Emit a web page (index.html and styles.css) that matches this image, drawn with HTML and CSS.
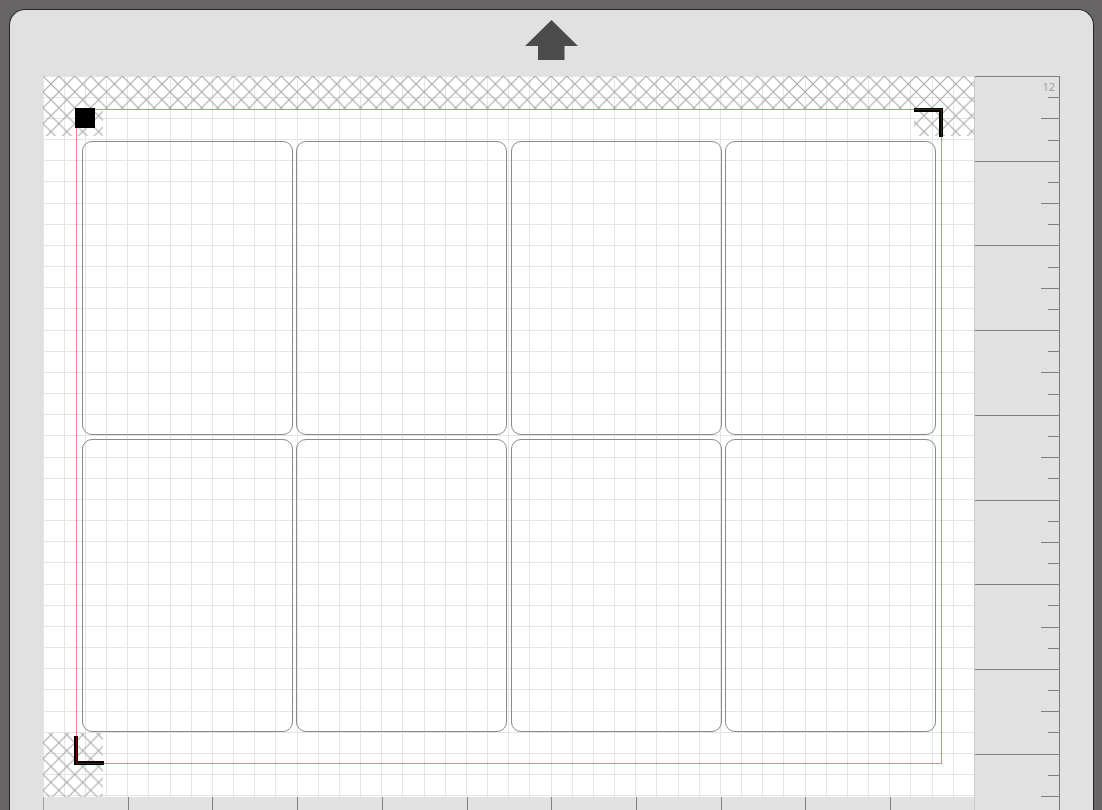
FILE: index.html
```html
<!DOCTYPE html>
<html lang="en">
<head>
<meta charset="utf-8">
<title>Mat Preview</title>
<link rel="stylesheet" href="styles.css">
</head>
<body>
<div class="device">
  <header class="device-head">
    <svg class="load-arrow" width="53" height="40" viewBox="0 0 53 40" aria-label="Load mat">
      <polygon points="26.5,0 53,26 39.5,26 39.5,40 13,40 13,26 0,26"/>
    </svg>
  </header>

  <div class="workspace">
    <div class="mat-col">
      <div class="mat">
        <svg class="mat-art" width="931" height="721" viewBox="0 0 931 721">
          <defs>
            <pattern id="hatch" width="15.875" height="15.875" patternUnits="userSpaceOnUse">
              <path d="M-1 -1L16.875 16.875M16.875 -1L-1 16.875M-1 1L1 -1M14.875 16.875L16.875 14.875" class="hatch-line"/>
            </pattern>
          </defs>
          <!-- quarter-inch grid -->
          <path class="grid" d="M0.5 0V721M21.5 0V721M42.5 0V721M63.5 0V721M84.5 0V721M105.5 0V721M127.5 0V721M148.5 0V721M169.5 0V721M190.5 0V721M211.5 0V721M232.5 0V721M254.5 0V721M275.5 0V721M296.5 0V721M317.5 0V721M338.5 0V721M359.5 0V721M381.5 0V721M402.5 0V721M423.5 0V721M444.5 0V721M465.5 0V721M486.5 0V721M508.5 0V721M529.5 0V721M550.5 0V721M571.5 0V721M592.5 0V721M613.5 0V721M635.5 0V721M656.5 0V721M677.5 0V721M698.5 0V721M719.5 0V721M740.5 0V721M762.5 0V721M783.5 0V721M804.5 0V721M825.5 0V721M846.5 0V721M867.5 0V721M889.5 0V721M910.5 0V721
          M0 0.5H931M0 21.5H931M0 42.5H931M0 63.5H931M0 84.5H931M0 105.5H931M0 127.5H931M0 148.5H931M0 169.5H931M0 190.5H931M0 211.5H931M0 232.5H931M0 254.5H931M0 275.5H931M0 296.5H931M0 317.5H931M0 338.5H931M0 359.5H931M0 381.5H931M0 402.5H931M0 423.5H931M0 444.5H931M0 465.5H931M0 486.5H931M0 508.5H931M0 529.5H931M0 550.5H931M0 571.5H931M0 592.5H931M0 613.5H931M0 635.5H931M0 656.5H931M0 677.5H931M0 698.5H931M0 719.5H931"/>
          <!-- no-cut zones along the mat edge -->
          <path class="hatch" d="M0 0H931V33H0Z M0 0H60V60H0Z M871 0H931V60H871Z M0 657H60V721H0Z"/>
          <!-- registration brackets -->
          <rect class="reg" x="871" y="32" width="29" height="4"/>
          <rect class="reg" x="896" y="32" width="4" height="29"/>
          <rect class="reg" x="31" y="660" width="4" height="29"/>
          <rect class="reg" x="31" y="685" width="30" height="4"/>
          <!-- printable area -->
          <rect class="print-area" x="33.5" y="33.5" width="865" height="654"/>
          <rect class="reg" x="32" y="32" width="20" height="20"/>
        </svg>

        <div class="sheet">
          <div class="card"></div>
          <div class="card"></div>
          <div class="card"></div>
          <div class="card"></div>
          <div class="card"></div>
          <div class="card"></div>
          <div class="card"></div>
          <div class="card"></div>
        </div>
      </div>

      <div class="ruler-h">
        <svg width="931" height="40" viewBox="0 0 931 40">
          <path class="ruler-edge" d="M0.5 0V40"/>
          <path class="tick" d="M85.5 0V40M169.5 0V40M254.5 0V40M339.5 0V40M424.5 0V40M508.5 0V40M593.5 0V40M678.5 0V40M762.5 0V40M847.5 0V40"/>
        </svg>
      </div>
    </div>

    <div class="ruler-v">
      <svg width="84" height="740" viewBox="0 0 84 740">
        <text class="ruler-num" x="80" y="14.5" text-anchor="end">12</text>
        <!-- inch lines -->
        <path class="tick" d="M0 0.5H84M0 85.5H84M0 169.5H84M0 254.5H84M0 339.5H84M0 424.5H84M0 508.5H84M0 593.5H84M0 678.5H84"/>
        <!-- half-inch ticks -->
        <path class="tick" d="M66 42.5H84M66 127.5H84M66 212.5H84M66 296.5H84M66 381.5H84M66 466.5H84M66 551.5H84M66 635.5H84M66 720.5H84"/>
        <!-- quarter-inch ticks -->
        <path class="tick" d="M73 21.5H84M73 64.5H84M73 106.5H84M73 148.5H84M73 191.5H84M73 233.5H84M73 275.5H84M73 318.5H84M73 360.5H84M73 402.5H84M73 445.5H84M73 487.5H84M73 529.5H84M73 572.5H84M73 614.5H84M73 656.5H84M73 699.5H84"/>
      </svg>
    </div>
  </div>
</div>
</body>
</html>
```

FILE: styles.css
```css
* {
  box-sizing: border-box;
}

html,
body {
  margin: 0;
  height: 100%;
}

body {
  background: #676565;
  overflow: hidden;
  font-family: "Open Sans", "Liberation Sans", sans-serif;
}

/* machine body */
.device {
  margin: 9px 0 0 9px;
  width: 1085px;
  height: 830px;
  background: #e1e1e1;
  border: 1px solid #262626;
  border-bottom: 0;
  border-radius: 16px 16px 0 0;
}

.device-head {
  height: 66px;
  padding-top: 10px;
  display: flex;
  justify-content: center;
  align-items: flex-start;
}

.load-arrow {
  display: block;
  fill: #4b4b4b;
}

.workspace {
  display: flex;
  padding-left: 33px;
}

.mat-col {
  width: 931px;
  display: flex;
  flex-direction: column;
}

/* cutting mat: art layer and sheet layer share one cell */
.mat {
  display: grid;
  width: 931px;
  height: 721px;
  background: #ffffff;
}

.mat > * {
  grid-area: 1 / 1;
}

.mat-art {
  display: block;
}

.grid {
  fill: none;
  stroke: #e5e5e5;
  stroke-width: 1;
  shape-rendering: crispEdges;
}

.hatch-line {
  fill: none;
  stroke: #a4a4a4;
  stroke-width: 1;
}

.hatch {
  fill: url(#hatch);
}

.reg {
  fill: #000000;
  shape-rendering: crispEdges;
}

/* translucent red: pink on the mat, dark red across the black brackets */
.print-area {
  fill: none;
  stroke: rgba(232, 0, 0, 0.5);
  stroke-width: 1;
  shape-rendering: crispEdges;
}

.sheet {
  display: grid;
  grid-template-columns: repeat(4, 1fr);
  grid-template-rows: repeat(2, 293.5px);
  column-gap: 3.5px;
  row-gap: 4px;
  padding: 65px 38px 0 39px;
  align-content: start;
}

.card {
  border: 1px solid #8a8a8a;
  border-radius: 10px;
}

/* rulers */
.ruler-h {
  height: 40px;
  background: #e1e1e1;
}

.ruler-h svg,
.ruler-v svg {
  display: block;
}

.ruler-v {
  width: 86px;
  height: 760px;
  border-left: 1px solid #cbcbcb;
  border-right: 1px solid #7b7b7b;
}

.tick {
  fill: none;
  stroke: #7f7f7f;
  stroke-width: 1;
  shape-rendering: crispEdges;
}

.ruler-edge {
  fill: none;
  stroke: #a0a0a0;
  stroke-width: 1;
  shape-rendering: crispEdges;
}

.ruler-num {
  font-family: "Open Sans", "Liberation Sans", sans-serif;
  font-size: 11px;
  fill: #9d9d9d;
}
```
